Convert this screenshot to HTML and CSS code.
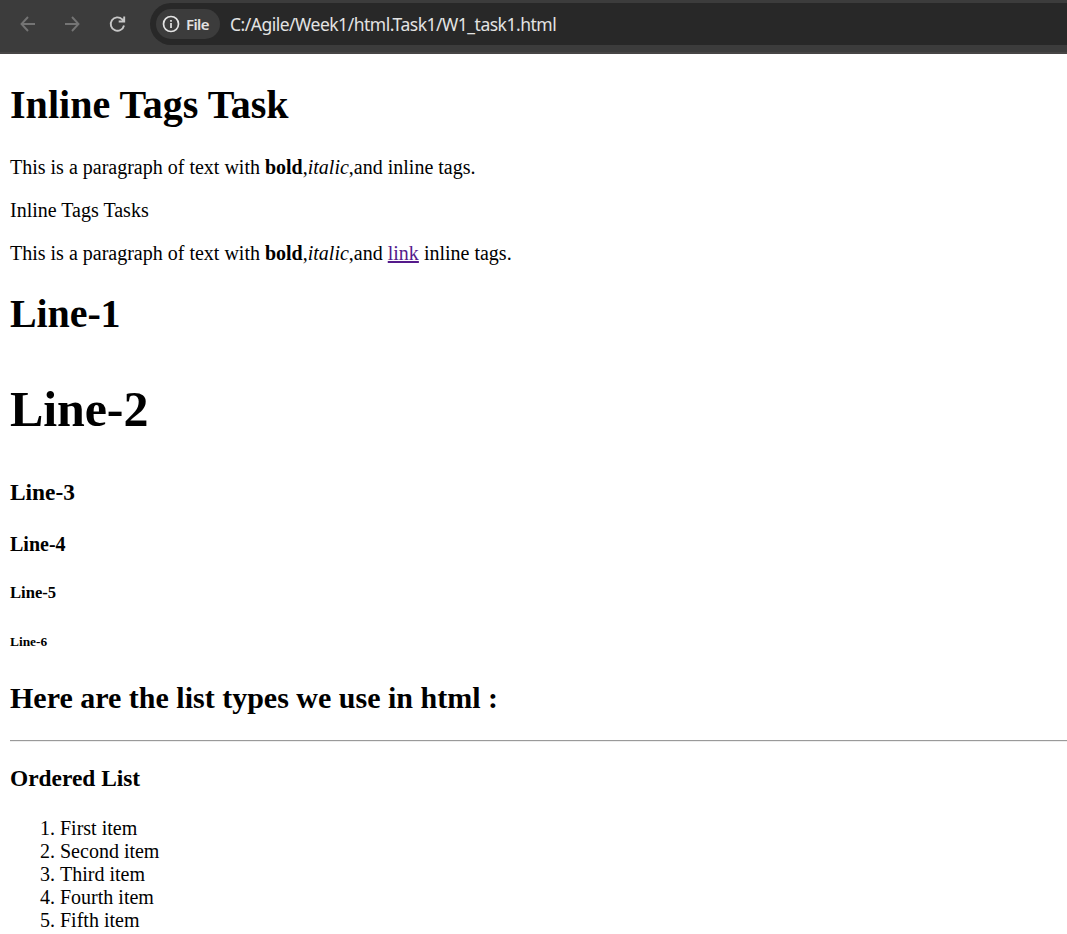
FILE: index.html
```html
<!DOCTYPE html>
<html lang="en">
<head>
<meta charset="utf-8">
<title>Inline Tags Task</title>
<link rel="stylesheet" href="styles.css">
</head>
<body>
<header class="toolbar">
  <svg class="nav dim" viewBox="0 0 20 20"><path d="M18 10H4.500M11 3 4.500 10l6.500 7"/></svg>
  <svg class="nav dim" viewBox="0 0 20 20"><path d="M3 10h13.500M10 3l6.500 7-6.500 7"/></svg>
  <svg class="nav" viewBox="0 0 20 20"><path d="M17 11.500A6.700 6.700 0 1 1 15.200 5.300L17 7M17.200 2.500v5h-5.500"/></svg>
  <div class="address">
    <div class="chip">
      <svg class="info" viewBox="0 0 18 18"><circle cx="9" cy="9" r="7.500"/><path d="M9 8v5M9 5v1.700"/></svg>
      <span class="scheme">File</span>
    </div>
    <span class="url">C:/Agile/Week1/html.Task1/W1_task1.html</span>
  </div>
</header>
<main class="page">
  <h1 class="title">Inline Tags Task</h1>
  <p class="text">This is a paragraph of text with <b>bold</b>,<i>italic</i>,and inline tags.</p>
  <p class="text">Inline Tags Tasks</p>
  <p class="text">This is a paragraph of text with <b>bold</b>,<i>italic</i>,and <a class="link" href="#">link</a> inline tags.</p>
  <h1 class="line1">Line-1</h1>
  <h2 class="line2">Line-2</h2>
  <h3 class="line3">Line-3</h3>
  <h4 class="line4">Line-4</h4>
  <h5 class="line5">Line-5</h5>
  <h6 class="line6">Line-6</h6>
  <h2 class="section">Here are the list types we use in html :</h2>
  <hr class="rule">
  <h3 class="list-title">Ordered List</h3>
  <ol class="list">
    <li>First item</li>
    <li>Second item</li>
    <li>Third item</li>
    <li>Fourth item</li>
    <li>Fifth item</li>
  </ol>
</main>
</body>
</html>
```
FILE: styles.css
```css
* { box-sizing: border-box; }
body { margin: 0; height: 934px; overflow: hidden; background: #fff; color: #000; font: 20px/23px "Liberation Serif", "Times New Roman", serif; }
.toolbar { display: flex; align-items: center; height: 54px; padding: 0 0 4px 17px; background: #3c3c3c; border-bottom: 2px solid #474545; font-family: "Noto Sans", sans-serif; }
.nav { width: 20px; height: 20px; margin-right: 25px; fill: none; stroke: #c7c7c7; stroke-width: 1.9; flex: none; }
.dim { stroke: #747474; }
.address { display: flex; align-items: center; flex: 1; height: 42px; margin-left: -2px; padding-left: 6px; background: #282828; border-radius: 21px 0 0 21px; color: #e3e3e3; }
.chip { display: flex; align-items: center; gap: 6px; width: 64px; height: 30px; padding-left: 6px; border-radius: 15px; background: #3c3c3c; font-size: 15px; font-weight: 600; }
.info { width: 18px; height: 18px; fill: none; stroke: #e3e3e3; stroke-width: 1.7; }
.scheme { letter-spacing: -.6px; }
.url { margin-left: 10px; font-size: 17.500px; letter-spacing: -.5px; white-space: nowrap; }
.page { padding: 28px 0 0 10px; }
h1, h2, h3, h4, h5, h6, p { margin: 0; white-space: nowrap; }
.title { font-size: 40px; line-height: 46px; letter-spacing: .04px; margin-bottom: 28px; }
.text { margin-bottom: 20px; }
.link { color: #551a8b; }
.line1 { font-size: 40px; line-height: 46px; letter-spacing: -.1px; margin-top: 26px; }
.line2 { font-size: 50px; line-height: 56px; letter-spacing: -.1px; margin-top: 44px; }
.line3 { font-size: 23.400px; line-height: 26px; margin-top: 42px; }
.line4 { font-size: 20px; line-height: 23px; margin-top: 28px; }
.line5 { font-size: 16.600px; line-height: 19px; margin-top: 27px; }
.line6 { font-size: 13.400px; line-height: 15px; margin-top: 32px; }
.section { font-size: 30px; line-height: 34px; margin-top: 32px; }
.rule { height: 2px; margin: 25px 0 23px; border: 0; border-top: 1px solid #9a9a9a; border-bottom: 1px solid #eee; }
.list-title { font-size: 23.400px; line-height: 26px; }
.list { margin: 26px 0 0; padding-left: 50px; }
```
